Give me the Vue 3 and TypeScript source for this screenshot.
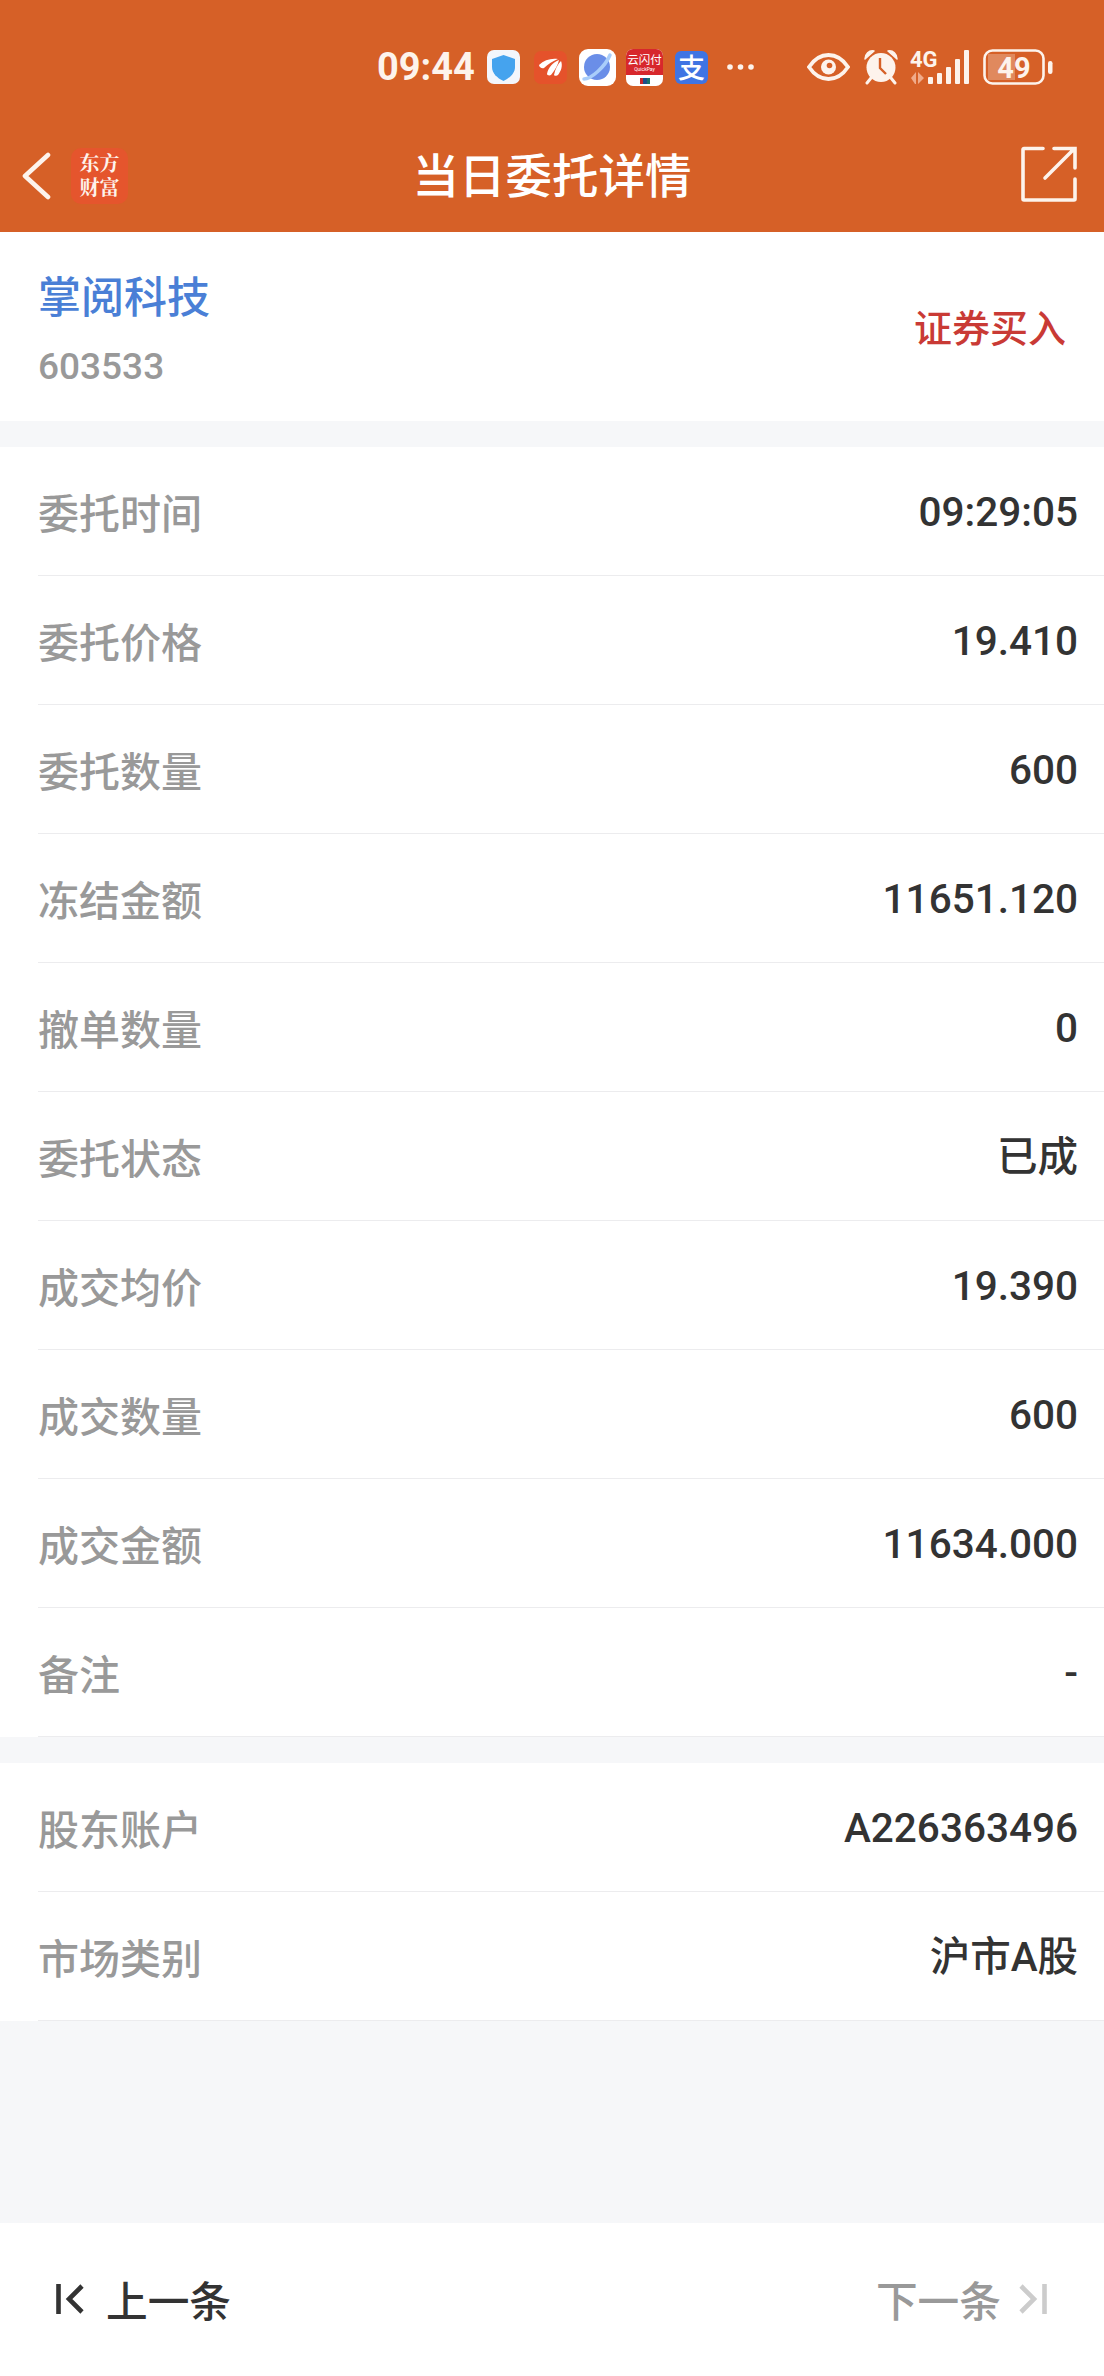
<script setup lang="ts">
interface Row { label: string; value: string }
const group1: Row[] = [
  { label: '委托时间', value: '09:29:05' },
  { label: '委托价格', value: '19.410' },
  { label: '委托数量', value: '600' },
  { label: '冻结金额', value: '11651.120' },
  { label: '撤单数量', value: '0' },
  { label: '委托状态', value: '已成' },
  { label: '成交均价', value: '19.390' },
  { label: '成交数量', value: '600' },
  { label: '成交金额', value: '11634.000' },
  { label: '备注', value: '-' },
]
const group2: Row[] = [
  { label: '股东账户', value: 'A226363496' },
  { label: '市场类别', value: '沪市A股' },
]
</script>

<template>
  <div class="page">
    <header class="top">
      <div class="status">
        <span class="time">09:44</span>
        <svg class="ic shield" width="33" height="34" viewBox="0 0 33 34">
          <rect width="33" height="34" rx="7" fill="#f3f6fc" />
          <path d="M16.5 5 L28 9 V17 C28 23 23 28 16.5 31 C10 28 5 23 5 17 V9 Z" fill="#45a3ee" />
        </svg>
        <svg class="ic banana" width="33" height="33" viewBox="0 0 33 33">
          <rect width="33" height="33" rx="7" fill="#e5522b" />
          <path d="M5 14 C10 9 17 7 24 8 C19 10 14 13 10 17 C8 18 5 16 5 14 Z M13 23 C14 17 19 11 25 9 C24 14 21 19 17 24 C15 25 13 24 13 23 Z M20 24 C21 18 24 13 27 10 C29 15 27 20 24 24 C23 25 20 25 20 24 Z" fill="#fff" />
        </svg>
        <svg class="ic planet" width="37" height="37" viewBox="0 0 37 37">
          <rect width="37" height="37" rx="9" fill="#fff" />
          <circle cx="18" cy="18" r="13" fill="#6a8ee8" />
          <path d="M5 30 C12 30 26 18 31 6" fill="none" stroke="#a9cdfa" stroke-width="3.5" stroke-linecap="round" />
        </svg>
        <div class="ic union">
          <span class="union-title">云闪付</span>
          <span class="union-sub">QuickPay</span>
          <span class="union-mark"></span>
        </div>
        <div class="ic alipay">支</div>
        <svg class="ic dots" width="29" height="8" viewBox="0 0 29 8">
          <circle cx="4" cy="4" r="2.8" fill="#fdf3ec" />
          <circle cx="14.5" cy="4" r="2.8" fill="#fdf3ec" />
          <circle cx="25" cy="4" r="2.8" fill="#fdf3ec" />
        </svg>
        <svg class="ic eye" width="43" height="28" viewBox="0 0 43 28">
          <path d="M2 14 C8 5 14 2 21.5 2 C29 2 35 5 41 14 C35 23 29 26 21.5 26 C14 26 8 23 2 14 Z" fill="none" stroke="#fdf3ec" stroke-width="3.8" />
          <circle cx="21.5" cy="14" r="7.5" fill="#fdf3ec" />
          <circle cx="22.5" cy="12.5" r="2.8" fill="#d66027" />
        </svg>
        <svg class="ic alarm" width="36" height="36" viewBox="0 0 36 36">
          <circle cx="18" cy="18.5" r="14.5" fill="#fdf3ec" />
          <path d="M2 10 C2 5 6 1 11 2 Z M34 10 C34 5 30 1 25 2 Z" fill="#fdf3ec" stroke="#fdf3ec" stroke-width="1.5" stroke-linejoin="round" />
          <path d="M8 29 L4 34 M28 29 L32 34" stroke="#fdf3ec" stroke-width="3" stroke-linecap="round" />
          <path d="M17 9 V19 L23 25" fill="none" stroke="#d66027" stroke-width="2.4" />
        </svg>
        <svg class="ic signal" width="60" height="44" viewBox="0 -4 60 44">
          <text x="0" y="18" class="four-g">4G</text>
          <path d="M1 29 L6 23 V35 H5 Z M8 35 V23 L14 29 Z" fill="#f0ab8a" />
          <rect x="18" y="28" width="5" height="7" rx="1" fill="#fdf3ec" />
          <rect x="27" y="24" width="5" height="11" rx="1" fill="#fdf3ec" />
          <rect x="36" y="18" width="5" height="17" rx="1" fill="#fdf3ec" />
          <rect x="45" y="10" width="5" height="25" rx="1" fill="#fdf3ec" />
          <rect x="54" y="1" width="5" height="34" rx="1" fill="#fdf3ec" />
        </svg>
        <svg class="ic battery" width="71" height="36" viewBox="0 0 71 36">
          <rect x="1.5" y="1.5" width="59" height="33" rx="8" fill="none" stroke="#fdf3ec" stroke-width="2.6" />
          <path d="M5 5 H32 V31 H5 Z" fill="#fdf3ec" opacity=".28" />
          <rect x="65" y="12" width="4.5" height="13" rx="2.2" fill="#fdf3ec" />
          <text x="31" y="29" text-anchor="middle" class="batt-num">49</text>
        </svg>
      </div>
      <nav class="nav">
        <svg class="back" width="30" height="48" viewBox="0 0 30 48">
          <path d="M26 3 L3 24 L26 45" fill="none" stroke="#fdf3ec" stroke-width="4.6" stroke-linecap="round" stroke-linejoin="round" />
        </svg>
        <div class="logo"><span>东方</span><span>财富</span></div>
        <h1 class="title">当日委托详情</h1>
        <svg class="share" width="56" height="56" viewBox="0 0 56 56">
          <path d="M22 2.5 H3 A1 1 0 0 0 2 3.5 V53 A1 1 0 0 0 3 54 H53 A1 1 0 0 0 54 53 V33" fill="none" stroke="#fdf3ec" stroke-width="3.6" stroke-linecap="round" />
          <path d="M24 32 L53 3 M33 2.5 H54 V22" fill="none" stroke="#fdf3ec" stroke-width="3.6" stroke-linecap="round" />
        </svg>
      </nav>
    </header>

    <section class="stock">
      <div class="ident">
        <div class="name">掌阅科技</div>
        <div class="code">603533</div>
      </div>
      <div class="kind">证券买入</div>
    </section>

    <section class="group">
      <div v-for="r in group1" :key="r.label" class="row">
        <span class="label">{{ r.label }}</span>
        <span class="value">{{ r.value }}</span>
      </div>
    </section>

    <section class="group">
      <div v-for="r in group2" :key="r.label" class="row">
        <span class="label">{{ r.label }}</span>
        <span class="value">{{ r.value }}</span>
      </div>
    </section>

    <div class="spacer"></div>

    <footer class="foot">
      <div class="step">
        <svg width="28" height="32" viewBox="0 0 28 32">
          <path d="M2.5 1 V31 M26 3 L13 16 L26 29" fill="none" stroke="#333" stroke-width="4.6" />
        </svg>
        <span>上一条</span>
      </div>
      <div class="step off">
        <span>下一条</span>
        <svg width="28" height="32" viewBox="0 0 28 32">
          <path d="M25.5 1 V31 M2 3 L15 16 L2 29" fill="none" stroke="#ccc" stroke-width="4.6" />
        </svg>
      </div>
    </footer>
  </div>
</template>

<style>
html, body { margin: 0; background: #f6f7f9; }
</style>

<style scoped>
.page {
  width: 1104px;
  height: 2376px;
  display: flex;
  flex-direction: column;
  background: #f6f7f9;
  font-family: Roboto, "Noto Sans CJK SC", sans-serif;
}
.top { background: #d66027; height: 232px; flex: none; }
.status { height: 120px; display: flex; align-items: center; padding: 14px 0 0 377px; box-sizing: border-box; }
.time { font: 700 38px/1 Roboto, sans-serif; color: #fdf3ec; width: 98px; flex: none; }
.ic { flex: none; display: block; }
.shield { margin-left: 12px; }
.banana { margin-left: 14px; }
.planet { margin-left: 12px; }
.union {
  margin-left: 10px; width: 37px; height: 37px; border-radius: 7px; background: #fff; overflow: hidden;
  display: flex; flex-direction: column; align-items: center; position: relative;
}
.union::before { content: ""; position: absolute; left: 0; right: 0; top: 0; height: 26px; background: #d7272c; }
.union-title { position: relative; font: 400 11.5px/14px "Noto Sans CJK SC", sans-serif; color: #fff; margin-top: 3px; }
.union-sub { position: relative; font: 400 5px/6px Roboto, sans-serif; color: #fff; }
.union-mark { position: absolute; left: 14px; bottom: 2px; width: 10px; height: 6px; background: linear-gradient(90deg, #c8262c 33%, #1b4f8a 33%, #1b4f8a 66%, #18736d 66%); }
.alipay {
  margin-left: 12px; width: 33px; height: 33px; border-radius: 6px; background: #3f74e3; color: #fff;
  font: 500 27px/32px "Noto Sans CJK SC", sans-serif; text-align: center;
}
.dots { margin-left: 18px; }
.eye { margin-left: 52px; }
.alarm { margin-left: 13px; }
.signal { margin-left: 11px; }
.battery { margin-left: 13px; }
.four-g { font: 700 22px Roboto, sans-serif; fill: #fdf3ec; }
.batt-num { font: 700 29px Roboto, sans-serif; fill: #fdf3ec; }

.nav { height: 112px; position: relative; display: flex; align-items: center; }
.back { margin-left: 22px; flex: none; }
.logo {
  margin-left: 19px; width: 57px; height: 56px; border-radius: 10px; background: #e5552d; color: #fdf3ec;
  display: flex; flex-direction: column; align-items: center; justify-content: center;
  font: 700 20px/24px "Liberation Serif", "Noto Serif CJK SC", "Noto Sans CJK SC", serif;
}
.logo span { display: block; }
.title {
  position: absolute; left: 0; right: 0; top: -3px; margin: 0; text-align: center;
  font: 500 46.5px/112px "Noto Sans CJK SC", sans-serif; color: #fff;
}
.share { position: absolute; right: 27px; top: 26px; }

.stock {
  height: 189px; flex: none; box-sizing: border-box; background: #fff;
  padding: 0 38px; display: flex; justify-content: space-between; align-items: center;
}
.ident { align-self: flex-start; padding-top: 32px; }
.name { font: 500 43px/60px "Noto Sans CJK SC", sans-serif; color: #4a7fd6; }
.code { font: 500 37px/48px Roboto, sans-serif; color: #999; margin-top: 19px; }
.kind { font: 500 38px/1 "Noto Sans CJK SC", sans-serif; color: #c93a35; margin-bottom: 1px; }

.group { background: #fff; margin-top: 26px; flex: none; }
.row {
  height: 129px; box-sizing: border-box; margin-left: 38px; padding-right: 26px;
  border-bottom: 1px solid #ececee;
  display: flex; align-items: center; justify-content: space-between;
}
.label { font: 500 41px/1 "Noto Sans CJK SC", sans-serif; color: #999; }
.value { font: 500 40.5px/1 Roboto, "Noto Sans CJK SC", sans-serif; color: #333; padding-top: 2px; }

.spacer { flex: 1; }
.foot {
  height: 153px; flex: none; background: #fff; display: flex; align-items: center; justify-content: space-between;
  padding: 0 57px 0 56px; box-sizing: border-box;
}
.step { display: flex; align-items: center; gap: 22px; font: 500 41.7px/1 "Noto Sans CJK SC", sans-serif; color: #333; }
.step.off { color: #999; gap: 18px; }
</style>
